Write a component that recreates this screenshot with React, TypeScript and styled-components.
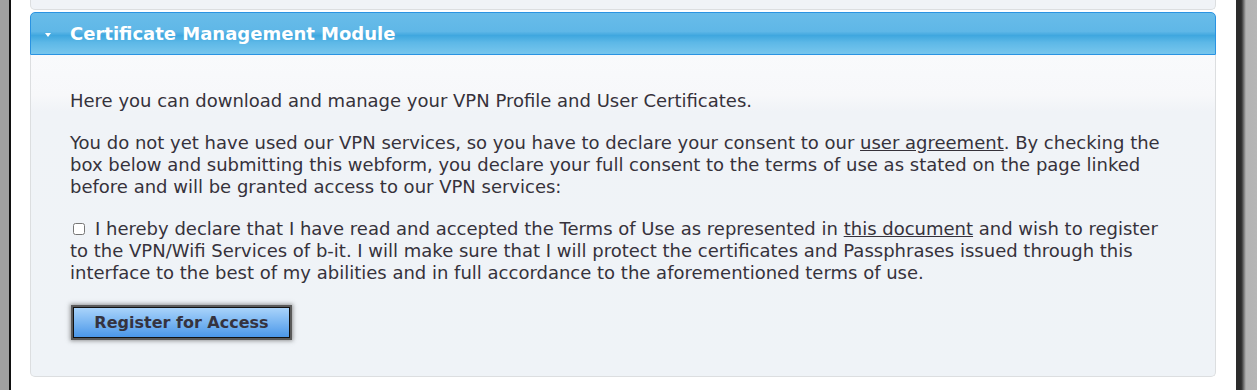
import styled, { createGlobalStyle } from 'styled-components';

const GlobalStyle = createGlobalStyle`
  html, body {
    margin: 0;
    padding: 0;
    background: #fff;
  }
  body {
    font-family: 'DejaVu Sans', Verdana, sans-serif;
  }
`;

const Screen = styled.div`
  display: flex;
  width: 1257px;
  height: 390px;
  overflow: hidden;
`;

const LeftEdge = styled.div`
  width: 11px;
  flex-shrink: 0;
  background: linear-gradient(to right, #a0a0a0 0, #a0a0a0 9px, #111 9px, #111 11px);
`;

const RightEdge = styled.div`
  width: 21px;
  flex-shrink: 0;
  background: linear-gradient(
    to right,
    #2b2b2b 0,
    #2b2b2b 5px,
    #3c3c3c 6px,
    #7a7a7a 8px,
    #b3b3b3 10px,
    #b6b6b6 100%
  );
`;

const Content = styled.div`
  flex: 1;
  padding: 0 20px 0 19px;
  display: flex;
  flex-direction: column;
`;

const PrevPanelTail = styled.div`
  height: 9px;
  background: #f0f3f7;
  border: 1px solid #dcdee0;
  border-top: none;
  border-radius: 0 0 5px 5px;
`;

const Panel = styled.section`
  margin-top: 2px;
  display: flex;
  flex-direction: column;
`;

const Header = styled.h3`
  margin: 0;
  height: 41px;
  display: flex;
  align-items: center;
  gap: 19px;
  padding: 0 0 0 14px;
  border: 1px solid #2a93e2;
  border-radius: 5px 5px 0 0;
  background: linear-gradient(
    to bottom,
    #68bce9 0%,
    #5fb7e7 45%,
    #3fa7df 55%,
    #5db8e7 72%,
    #77c6ed 100%
  );
  color: #fff;
  font-size: 18px;
  font-weight: bold;
`;

const Caret = styled.span`
  width: 0;
  height: 0;
  border-left: 3.5px solid transparent;
  border-right: 3.5px solid transparent;
  border-top: 4px solid #fff;
  margin-top: 2px;
`;

const Body = styled.div`
  border: 1px solid #dcdee0;
  border-top: none;
  border-radius: 0 0 5px 5px;
  background: linear-gradient(
    to bottom,
    #f9fafc 0,
    #f7f8fa 40px,
    #f0f3f7 56px,
    #eff3f7 100%
  );
  padding: 35px 40px 38px 39px;
  color: #36323b;
  font-size: 18px;
  line-height: 22px;
`;

const Para = styled.p`
  margin: 0 0 20px;
`;

const Link = styled.a`
  color: inherit;
  text-decoration: underline;
`;

const Check = styled.input`
  width: 12px;
  height: 12px;
  margin: 0 10px 0 3px;
  vertical-align: 0;
  accent-color: #888;
`;

const Button = styled.button`
  margin: 3px 0 0 3px;
  width: 217px;
  height: 31px;
  border: 1px solid #111;
  background: linear-gradient(to bottom, #a9d3fa 0%, #7ab6f2 50%, #4b97e9 100%);
  box-shadow: 0 0 0 2px #5a5a5a, 0 0 4px 3px rgba(60, 60, 60, 0.5);
  color: #35333f;
  font-family: 'DejaVu Sans', Verdana, sans-serif;
  font-size: 16px;
  font-weight: bold;
  cursor: pointer;
`;

export default function App() {
  return (
    <>
      <GlobalStyle />
      <Screen>
        <LeftEdge />
        <Content>
          <PrevPanelTail />
          <Panel>
            <Header>
              <Caret />
              Certificate Management Module
            </Header>
            <Body>
              <Para>Here you can download and manage your VPN Profile and User Certificates.</Para>
              <Para>
                You do not yet have used our VPN services, so you have to declare your consent to our{' '}
                <Link href="#">user agreement</Link>. By checking the box below and submitting this
                webform, you declare your full consent to the terms of use as stated on the page linked
                before and will be granted access to our VPN services:
              </Para>
              <Para>
                <Check type="checkbox" />
                I hereby declare that I have read and accepted the Terms of Use as represented in{' '}
                <Link href="#">this document</Link> and wish to register to the VPN/Wifi Services of
                b-it. I will make sure that I will protect the certificates and Passphrases issued
                through this interface to the best of my abilities and in full accordance to the
                aforementioned terms of use.
              </Para>
              <Button type="button">Register for Access</Button>
            </Body>
          </Panel>
        </Content>
        <RightEdge />
      </Screen>
    </>
  );
}
